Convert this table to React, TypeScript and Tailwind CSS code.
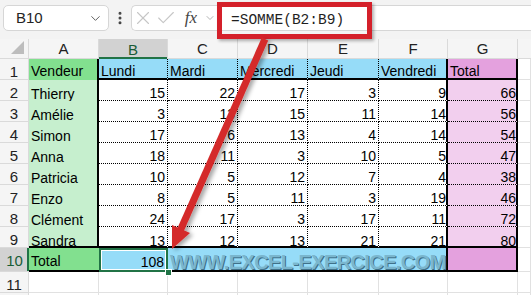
import React from "react";
import { Check, ChevronDown, EllipsisVertical, X } from "lucide-react";

type Vendor = { name: string; values: number[]; total: number };

const days = ["Lundi", "Mardi", "Mercredi", "Jeudi", "Vendredi"];

const vendors: Vendor[] = [
  { name: "Thierry", values: [15, 22, 17, 3, 9], total: 66 },
  { name: "Amélie", values: [3, 13, 15, 11, 14], total: 56 },
  { name: "Simon", values: [17, 6, 13, 4, 14], total: 54 },
  { name: "Anna", values: [18, 11, 3, 10, 5], total: 47 },
  { name: "Patricia", values: [10, 5, 12, 7, 4], total: 38 },
  { name: "Enzo", values: [8, 5, 11, 3, 19], total: 46 },
  { name: "Clément", values: [24, 17, 3, 17, 11], total: 72 },
  { name: "Sandra", values: [13, 12, 13, 21, 21], total: 80 },
];

// border presets
const GRID = "border-r border-b border-[#e1e1e1]";
const DOT_RB = "border-r border-b border-dotted border-black";
const DOT_R = "border-r border-dotted border-black";
const DOT_B = "border-b border-dotted border-black";
const THICK_R = "shadow-[inset_-2px_0_0_#000]";
const THICK_B = "shadow-[inset_0_-2px_0_#000]";
const THICK_RB = "shadow-[inset_-2px_-2px_0_#000]";

const Cell = ({
  className = "",
  right,
  children,
}: {
  className?: string;
  right?: boolean;
  children?: React.ReactNode;
}) => (
  <div
    className={`flex items-end overflow-hidden whitespace-nowrap px-[2px] text-[14px] leading-[14px] ${
      right ? "justify-end" : "justify-start"
    } ${className}`}
  >
    {children}
  </div>
);

const RowHeader = ({ n, active }: { n?: number; active?: boolean }) => (
  <div
    className={
      active
        ? "flex items-end justify-center border-b border-[#dadada] bg-[#d2d2d2] pb-[3px] text-[15px] leading-[14px] text-[#185c37] shadow-[inset_-2px_0_0_#217346]"
        : "flex items-end justify-center border-r border-b border-[#dadada] bg-[#f5f5f5] text-[15px] leading-[14px] text-[#222]"
    }
  >
    {n}
  </div>
);

const ColHeader = ({ label, active }: { label: string; active?: boolean }) => (
  <div
    className={
      active
        ? "flex items-center justify-center border-r border-[#dadada] bg-[#d2d2d2] pt-[2px] text-[15px] text-[#185c37] shadow-[inset_0_-2px_0_#217346]"
        : "flex items-center justify-center border-r border-b border-[#dadada] bg-[#f5f5f5] pt-[2px] text-[15px] text-[#222]"
    }
  >
    {label}
  </div>
);

export default function App() {
  return (
    <div className="relative h-[295px] w-[531px] overflow-hidden bg-white font-['Liberation_Sans',Arial,sans-serif] text-black">
      {/* Formula toolbar */}
      <div className="flex h-[39px] items-start bg-[#f3f3f3] pl-[3px] pt-[5px]">
        <div className="flex h-[26px] w-[106px] items-center justify-between rounded-[5px] border border-[#d6d6d6] bg-white pl-[12px] pr-[5px] text-[15px] text-[#242424]">
          <span>B10</span>
          <ChevronDown className="h-[15px] w-[15px] text-[#555]" strokeWidth={1.5} />
        </div>
        <div className="flex h-[26px] w-[22px] items-center justify-center text-[#444]">
          <EllipsisVertical className="h-[16px] w-[16px]" strokeWidth={2.5} />
        </div>
        <div className="flex h-[26px] flex-1 rounded-l-[5px] border border-r-0 border-[#d6d6d6] bg-white">
          <div className="flex w-[22px] items-center justify-center">
            <X className="h-[22px] w-[22px] text-[#c6c6c6]" strokeWidth={1.2} />
          </div>
          <div className="flex w-[24px] items-center justify-center">
            <Check className="h-[22px] w-[22px] text-[#c6c6c6]" strokeWidth={1.2} />
          </div>
          <div className="flex w-[26px] items-center justify-center font-['Liberation_Serif',serif] text-[17px] italic text-[#444]">
            fx
          </div>
          <div className="flex w-[12px] items-center justify-center">
            <ChevronDown className="h-[16px] w-[16px] text-[#9a9a9a]" strokeWidth={1.5} />
          </div>
          <div className="flex flex-1 items-center pl-[15px] pt-[5px] font-['Liberation_Mono',monospace] text-[14.5px] text-[#1f1f1f]">
            =SOMME(B2:B9)
          </div>
        </div>
      </div>

      {/* Sheet grid */}
      <div className="grid grid-cols-[29px_70px_69px_70px_70px_71px_69px_70px_1fr] grid-rows-[20px_21px_21px_21px_21px_21px_21px_21px_21px_21px_24px_21px_21px]">
        {/* column headers */}
        <div className="flex items-end justify-end border-r border-b border-[#dadada] bg-[#f5f5f5] pb-[3px] pr-[3px]">
          <svg width="14" height="14" viewBox="0 0 14 14">
            <polygon points="13,0 13,13 0,13" fill="#bdbdbd" />
          </svg>
        </div>
        <ColHeader label="A" />
        <ColHeader label="B" active />
        <ColHeader label="C" />
        <ColHeader label="D" />
        <ColHeader label="E" />
        <ColHeader label="F" />
        <ColHeader label="G" />
        <div className="border-b border-[#dadada] bg-[#f5f5f5]" />

        {/* row 1 */}
        <RowHeader n={1} />
        <Cell className={`bg-[#82e08f] pb-[2px] ${THICK_R}`}>Vendeur</Cell>
        {days.slice(0, 4).map((d) => (
          <Cell key={d} className={`bg-[#96dcf8] pb-[2px] ${DOT_R} ${THICK_B}`}>
            {d}
          </Cell>
        ))}
        <Cell className={`bg-[#96dcf8] pb-[2px] ${THICK_RB}`}>Vendredi</Cell>
        <Cell className={`bg-[#e4a1de] pb-[2px] ${THICK_RB}`}>Total</Cell>
        <div className={GRID} />

        {/* rows 2 - 9 */}
        {vendors.map((v, i) => {
          const last = i === vendors.length - 1;
          return (
            <React.Fragment key={v.name}>
              <RowHeader n={i + 2} />
              <Cell className={`bg-[#c6efce] ${last ? THICK_RB : THICK_R}`}>{v.name}</Cell>
              {v.values.slice(0, 4).map((n, j) => (
                <Cell key={j} right className={last ? `${DOT_R} ${THICK_B}` : DOT_RB}>
                  {n}
                </Cell>
              ))}
              <Cell right className={last ? THICK_RB : `${DOT_B} ${THICK_R}`}>
                {v.values[4]}
              </Cell>
              <Cell right className={`bg-[#f2cfee] ${last ? THICK_RB : `${DOT_B} ${THICK_R}`}`}>
                {v.total}
              </Cell>
              <div className={GRID} />
            </React.Fragment>
          );
        })}

        {/* row 10 */}
        <RowHeader n={10} active />
        <Cell className={`bg-[#82e08f] pb-[4px] ${THICK_B}`}>Total</Cell>
        <Cell right className="border-2 border-[#217346] bg-[#96dcf8] pb-[1px] shadow-[inset_0_0_0_1px_#fff]">
          108
        </Cell>
        <Cell className={`bg-[#96dcf8] ${THICK_B}`} />
        <Cell className={`bg-[#96dcf8] ${THICK_B}`} />
        <Cell className={`bg-[#96dcf8] ${THICK_B}`} />
        <Cell className={`bg-[#96dcf8] ${THICK_RB}`} />
        <Cell className={`bg-[#e4a1de] ${THICK_RB}`} />
        <div className={GRID} />

        {/* rows 11 - 12 (12 is only a sliver at the bottom edge) */}
        {[11, 12].map((n) => (
          <React.Fragment key={n}>
            <RowHeader n={n === 11 ? n : undefined} />
            <div className={GRID} />
            <div className={GRID} />
            <div className={GRID} />
            <div className={GRID} />
            <div className={GRID} />
            <div className={GRID} />
            <div className={GRID} />
            <div className={GRID} />
          </React.Fragment>
        ))}
      </div>

      {/* fill handle */}
      <div className="absolute left-[165px] top-[269px] h-[7px] w-[7px] border border-white bg-[#217346]" />

      {/* watermark */}
      <div className="absolute left-[170px] top-[252px] whitespace-nowrap text-[20px] font-bold leading-none tracking-[-0.6px] text-[#7ab6ce] [text-shadow:1px_1px_0_#3f7089]">
        WWW.EXCEL-EXERCICE.COM
      </div>

      {/* highlight around the formula */}
      <div className="absolute left-[217px] top-[2px] h-[37px] w-[155px] border-[5px] border-[#d4202a] shadow-[2px_2px_3px_rgba(0,0,0,0.3)]" />

      {/* arrow */}
      <svg
        className="pointer-events-none absolute left-0 top-0"
        width="531"
        height="295"
        viewBox="0 0 531 295"
      >
        <defs>
          <filter id="arrowShadow" x="-30%" y="-10%" width="160%" height="120%">
            <feDropShadow dx="3" dy="2" stdDeviation="2" floodColor="#000" floodOpacity="0.35" />
          </filter>
        </defs>
        <g filter="url(#arrowShadow)">
          <line x1="265" y1="39" x2="180" y2="231" stroke="#d42a2a" strokeWidth="7" />
          <polygon points="172,249 190,233 172,225" fill="#d42a2a" />
        </g>
      </svg>
    </div>
  );
}
